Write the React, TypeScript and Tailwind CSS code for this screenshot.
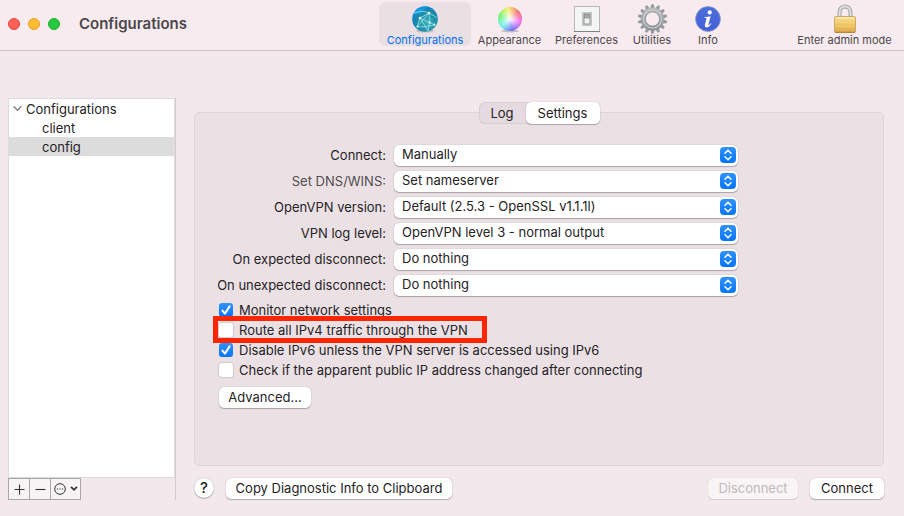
import React, { useState } from "react";

const spokes = Array.from({ length: 14 }, (_, i) => (i * 360) / 14);
const hues = Array.from({ length: 36 }, (_, i) => i * 10);

function GlobeIcon() {
  return (
    <svg width="28" height="28" viewBox="0 0 28 28" aria-hidden="true">
      <defs>
        <radialGradient id="globe" cx="0.6" cy="0.65" r="0.7">
          <stop offset="0" stopColor="#3db2ba" />
          <stop offset="0.6" stopColor="#198aa8" />
          <stop offset="1" stopColor="#0b80cf" />
        </radialGradient>
      </defs>
      <ellipse cx="14" cy="26" rx="9" ry="1.6" fill="#000" opacity="0.15" />
      <circle cx="14" cy="14" r="12.8" fill="url(#globe)" />
      <path d="M2 10A12.8 12.8 0 0 1 17 1.6L9 9Z" fill="#18a3ea" opacity="0.7" />
      <g fill="none" stroke="#a9ebf4" strokeWidth="0.7">
        <path d="M3 8Q12 5 18 8T26 13M18 8L9 13M9 13L6 22M9 13Q15 16 24 20M18 8Q20 16 17 26M6 22Q15 22 24 20M18 8L6 22M9 13L17 26" />
      </g>
      <g fill="#e6ffff">
        <circle cx="18" cy="8" r="1.2" />
        <circle cx="9" cy="13" r="1.3" />
        <circle cx="18.6" cy="17.6" r="1.1" />
        <circle cx="6.5" cy="21.5" r="1" />
        <circle cx="23.5" cy="19.5" r="0.9" />
      </g>
    </svg>
  );
}

function ColorWheelIcon() {
  return (
    <svg width="28" height="28" viewBox="0 0 28 28" aria-hidden="true">
      <defs>
        <radialGradient id="wheel">
          <stop offset="0" stopColor="#fff" stopOpacity="0.95" />
          <stop offset="0.5" stopColor="#fff" stopOpacity="0.5" />
          <stop offset="1" stopColor="#fff" stopOpacity="0.1" />
        </radialGradient>
      </defs>
      <ellipse cx="14" cy="26" rx="9" ry="1.5" fill="#000" opacity="0.2" />
      {hues.map((h) => (
        <path
          key={h}
          d="M14 14L25.9 13.9A12 12 0 0 1 25.6 16.6Z"
          fill={`hsl(${(h + 310) % 360} 85% 64%)`}
          transform={`rotate(${-h} 14 14)`}
        />
      ))}
      <circle cx="14" cy="14" r="12" fill="url(#wheel)" />
    </svg>
  );
}

function SwitchIcon() {
  return (
    <svg width="28" height="28" viewBox="0 0 28 28" aria-hidden="true">
      <rect x="1.5" y="1.5" width="25" height="25" fill="#f3f5f4" stroke="#b4b8b7" />
      <path d="M1 26.5H27" stroke="#7e8281" />
      <rect x="9.5" y="7.5" width="9" height="13" fill="#d3d6d5" stroke="#c3c6c5" />
      <rect x="11" y="9" width="6" height="10" fill="#a4a7a6" stroke="#8b8e8d" />
      <rect x="11.5" y="13.5" width="5" height="5" fill="#f0f1f0" />
    </svg>
  );
}

function GearIcon() {
  return (
    <svg width="32" height="30" viewBox="0 0 32 30" aria-hidden="true">
      <defs>
        <linearGradient id="gear" x2="0" y2="1">
          <stop offset="0" stopColor="#b9bdbe" />
          <stop offset="1" stopColor="#8f9496" />
        </linearGradient>
      </defs>
      <g fill="#969b9d">
        {spokes.map((a) => (
          <path key={a} d="M14.2 4.6L15.4 0.2H17.6L18.8 4.6Z" transform={`rotate(${a} 16.5 15)`} />
        ))}
      </g>
      <circle cx="16.5" cy="15" r="9.2" fill="none" stroke="url(#gear)" strokeWidth="4.4" />
      <circle cx="16.5" cy="15" r="9" fill="none" stroke="#c9cdce" strokeWidth="1.2" />
      <circle cx="16.5" cy="15" r="7.1" fill="none" stroke="#848a8c" strokeWidth="0.7" />
    </svg>
  );
}

function InfoIcon() {
  return (
    <svg width="28" height="28" viewBox="0 0 28 28" aria-hidden="true">
      <defs>
        <linearGradient id="info" x2="0" y2="1">
          <stop offset="0" stopColor="#4a6fd8" />
          <stop offset="1" stopColor="#4460dc" />
        </linearGradient>
      </defs>
      <circle cx="14" cy="14" r="12.4" fill="url(#info)" stroke="#8c9bc4" strokeWidth="0.8" />
      <circle cx="15.7" cy="7.4" r="2.1" fill="#fff" />
      <path
        d="M10.6 12.3Q13.6 11.8 16.6 11.2L14.4 19.4Q14.3 20.4 15 20Q15.8 19.4 16.6 18.2L17.3 18.7Q15.2 22.4 12.3 22.3Q10.3 22.1 10.9 19.6L12.5 14Q12.8 13 11.9 13L10.4 13.1Z"
        fill="#fff"
      />
    </svg>
  );
}

function LockIcon() {
  return (
    <svg width="24" height="30" viewBox="0 0 24 30" aria-hidden="true">
      <defs>
        <linearGradient id="brass" x2="0" y2="1">
          <stop offset="0" stopColor="#f8e097" />
          <stop offset="0.5" stopColor="#efc666" />
          <stop offset="1" stopColor="#dfa748" />
        </linearGradient>
      </defs>
      <path d="M6.5 14V8.2A5.5 5.8 0 0 1 17.5 8.2V14" fill="none" stroke="#9b9ea0" strokeWidth="4" />
      <path d="M6.5 14V8.2A5.5 5.8 0 0 1 17.5 8.2V14" fill="none" stroke="#dcdedf" strokeWidth="2.2" />
      <rect x="1.5" y="12.5" width="21" height="16" rx="1.5" fill="url(#brass)" stroke="#c49a50" strokeWidth="0.8" />
      <path d="M3 14H21" stroke="#fdf0bd" />
      <path d="M2.5 18.5H21.5M2.5 22.5H21.5" stroke="#f7dc8c" strokeWidth="0.5" />
      <path d="M2 28.3H22" stroke="#a87529" strokeWidth="0.8" />
    </svg>
  );
}

function ToolbarItem({ label, width, active, children }: {
  label: string;
  width: string;
  active?: boolean;
  children: React.ReactNode;
}) {
  return (
    <button
      type="button"
      className={`flex h-11 shrink-0 flex-col items-center rounded-md text-[11px] leading-3 whitespace-nowrap ${width} ${
        active ? "bg-[#eadfe3] text-[#0070f5]" : "text-[#4b474a]"
      }`}
    >
      <span className="flex h-8 items-center justify-center pt-0.5">{children}</span>
      <span>{label}</span>
    </button>
  );
}

const settings = [
  { id: "connect", label: "Connect:", value: "Manually" },
  { id: "dns", label: "Set DNS/WINS:", value: "Set nameserver", dim: true },
  { id: "version", label: "OpenVPN version:", value: "Default (2.5.3 - OpenSSL v1.1.1l)" },
  { id: "loglevel", label: "VPN log level:", value: "OpenVPN level 3 - normal output" },
  { id: "expected", label: "On expected disconnect:", value: "Do nothing" },
  { id: "unexpected", label: "On unexpected disconnect:", value: "Do nothing" },
];

const options = [
  { id: "monitor", label: "Monitor network settings", on: true },
  { id: "route", label: "Route all IPv4 traffic through the VPN", on: false, marked: true },
  { id: "ipv6", label: "Disable IPv6 unless the VPN server is accessed using IPv6", on: true },
  { id: "ipcheck", label: "Check if the apparent public IP address changed after connecting", on: false },
];

const raised = "shadow-[0_0_1px_rgba(0,0,0,0.35),0_1px_1px_rgba(0,0,0,0.25)]";

function PopUp({ id, value }: { id: string; value: string }) {
  return (
    <div className="relative h-[21px]">
      <select
        id={id}
        defaultValue={value}
        className={`block h-[21px] w-full appearance-none rounded-[5px] bg-white pr-6 pb-0.5 pl-2 leading-[19px] ${raised}`}
      >
        <option>{value}</option>
      </select>
      <span className="pointer-events-none absolute top-0.5 right-0.5 flex size-4 items-center justify-center rounded bg-linear-to-b from-[#2f92ff] to-[#0474fc]">
        <svg width="10" height="12" viewBox="0 0 10 12" fill="none" stroke="#fff" strokeWidth="1.5" strokeLinecap="round" strokeLinejoin="round" aria-hidden="true">
          <path d="M2 4.2L5 1.3L8 4.2M2 7.8L5 10.7L8 7.8" />
        </svg>
      </span>
    </div>
  );
}

function CheckOption({ id, label, on, marked }: { id: string; label: string; on: boolean; marked?: boolean }) {
  const [checked, setChecked] = useState(on);
  return (
    <div className="relative flex h-5 w-fit items-center">
      <span className="relative size-3.5">
        <input
          id={id}
          type="checkbox"
          checked={checked}
          onChange={(e) => setChecked(e.target.checked)}
          className="block size-3.5 appearance-none rounded-[3px] bg-white shadow-[0_0_1px_1px_rgba(0,0,0,0.1)] checked:bg-linear-to-b checked:from-[#2f92ff] checked:to-[#0474fc] checked:shadow-none"
        />
        {checked && (
          <svg className="pointer-events-none absolute inset-0" width="14" height="14" viewBox="0 0 14 14" fill="none" stroke="#fff" strokeWidth="2" strokeLinecap="round" strokeLinejoin="round" aria-hidden="true">
            <path d="M3.4 7.6L5.9 10.6L10.6 3.4" />
          </svg>
        )}
      </span>
      <label htmlFor={id} className="pl-1.5 whitespace-nowrap">{label}</label>
      {marked && (
        <span className="pointer-events-none absolute -top-1 -right-[19px] -bottom-[3px] -left-1.5 border-5 border-[#fb2600]" />
      )}
    </div>
  );
}

export default function App() {
  return (
    <div className="flex min-h-screen flex-col bg-[#f3e8ec] font-['Inter','Liberation_Sans',sans-serif] text-[13px] leading-5 text-[#262325]">
      <header className="flex border-b border-[#cfc3c8] bg-[#f8ebf0] pt-0.5 pr-[5px] pb-1">
        <div className="flex w-[379px] shrink-0 items-center gap-2 pl-2">
          <button type="button" aria-label="Close" className="size-3 rounded-full border border-[#e2463f] bg-[#ff5f57]" />
          <button type="button" aria-label="Minimize" className="size-3 rounded-full border border-[#e0a028] bg-[#febc2e]" />
          <button type="button" aria-label="Zoom" className="size-3 rounded-full border border-[#1dae2c] bg-[#28c840]" />
          <h1 className="pl-[11px] text-[15px] font-semibold text-[#4b474a]">Configurations</h1>
        </div>
        <nav className="flex" aria-label="Toolbar">
          <ToolbarItem label="Configurations" width="w-[92px]" active><GlobeIcon /></ToolbarItem>
          <ToolbarItem label="Appearance" width="w-[77px]"><ColorWheelIcon /></ToolbarItem>
          <ToolbarItem label="Preferences" width="w-[77px]"><SwitchIcon /></ToolbarItem>
          <ToolbarItem label="Utilities" width="w-[54px]"><GearIcon /></ToolbarItem>
          <ToolbarItem label="Info" width="w-[58px]"><InfoIcon /></ToolbarItem>
        </nav>
        <div className="ml-auto">
          <ToolbarItem label="Enter admin mode" width="w-[109px]"><LockIcon /></ToolbarItem>
        </div>
      </header>

      <main className="flex flex-1 pt-[47px] pr-5 pb-4 pl-2">
        <aside className="flex w-[168px] shrink-0 flex-col border-r border-[#d5cacf]">
          <div className="flex-1 border border-[#dfdadc] bg-white leading-[21px]">
            <div className="flex h-[19px] items-center gap-1 pl-1">
              <svg width="9" height="9" viewBox="0 0 9 9" fill="none" stroke="#7d7a7c" strokeWidth="1.3" strokeLinecap="round" strokeLinejoin="round" aria-hidden="true">
                <path d="M1 2.7L4.5 6.3L8 2.7" />
              </svg>
              <span className="pt-px">Configurations</span>
            </div>
            <button type="button" className="flex h-[19px] w-full items-center pt-px pl-[33px]">client</button>
            <button type="button" className="flex h-[19px] w-full items-center bg-[#dcdcdc] pt-px pl-[33px]">config</button>
          </div>
          <div className="flex h-[22px] w-fit divide-x divide-[#aaa7a8] border border-[#aaa7a8] bg-[#f6f4f5]">
            <button type="button" aria-label="Add" className="flex w-[21px] items-center justify-center">
              <svg width="11" height="11" viewBox="0 0 11 11" stroke="#333" strokeWidth="1.1" aria-hidden="true"><path d="M5.5 0.5V10.5M0.5 5.5H10.5" /></svg>
            </button>
            <button type="button" aria-label="Remove" className="flex w-[21px] items-center justify-center">
              <svg width="11" height="11" viewBox="0 0 11 11" stroke="#333" strokeWidth="1.1" aria-hidden="true"><path d="M0.5 5.5H10.5" /></svg>
            </button>
            <button type="button" aria-label="More actions" className="flex w-[29px] items-center justify-center gap-1">
              <svg width="12" height="12" viewBox="0 0 12 12" aria-hidden="true">
                <circle cx="6" cy="6" r="5.3" fill="none" stroke="#333" />
                <path d="M2.9 6H4.1M5.4 6H6.6M7.9 6H9.1" stroke="#333" strokeWidth="1.2" />
              </svg>
              <svg width="8" height="8" viewBox="0 0 8 8" fill="none" stroke="#333" strokeWidth="1.7" aria-hidden="true"><path d="M1 1.8L4 4.8L7 1.8" /></svg>
            </button>
          </div>
        </aside>

        <section className="flex min-w-0 flex-1 flex-col pl-[18px]">
          <div role="tablist" className="relative z-10 mt-1 flex h-[22px] self-center rounded-md bg-[#e5dadf] shadow-[inset_0_0_0_1px_#d9ced3]">
            <button type="button" role="tab" aria-selected="false" className="w-[47px] rounded-md pb-px">Log</button>
            <button type="button" role="tab" aria-selected="true" className={`w-[74px] rounded-[5px] bg-white pb-px ${raised}`}>Settings</button>
          </div>

          <form className="-mt-3 flex-1 rounded-[5px] border border-[#dfd4d9] bg-[#ebe1e5] pt-8 pr-6 pl-6" onSubmit={(e) => e.preventDefault()}>
            <div className="-ml-0.5 grid grid-cols-[169px_minmax(0,344px)] gap-x-2 gap-y-[5px]">
              {settings.map((s) => (
                <React.Fragment key={s.id}>
                  <label htmlFor={s.id} className={`h-[21px] text-right leading-[21px] whitespace-nowrap ${s.dim ? "text-[#504c4f]" : ""}`}>{s.label}</label>
                  <PopUp id={s.id} value={s.value} />
                </React.Fragment>
              ))}
            </div>
            <div className="mt-1">
              {options.map((o) => (
                <CheckOption key={o.id} {...o} />
              ))}
            </div>
            <button type="button" className={`mt-[7px] h-[21px] w-[92px] rounded-[5px] bg-white pb-0.5 ${raised}`}>Advanced...</button>
          </form>

          <div className="mt-[11px] mb-px flex h-[22px] items-center">
            <button type="button" aria-label="Help" className={`size-5 rounded-full bg-white text-[15px] font-medium ${raised}`}>?</button>
            <button type="button" className={`ml-3 h-[21px] w-[226px] rounded-[5px] bg-white pb-0.5 ${raised}`}>Copy Diagnostic Info to Clipboard</button>
            <button type="button" disabled className="ml-auto h-[21px] w-[90px] rounded-[5px] bg-[#f9f4f6] pb-0.5 text-[#bfb9bc] shadow-[0_0_1px_rgba(0,0,0,0.2),0_1px_1px_rgba(0,0,0,0.1)]">Disconnect</button>
            <button type="button" className={`ml-3 h-[21px] w-[74px] rounded-[5px] bg-white pb-0.5 ${raised}`}>Connect</button>
          </div>
        </section>
      </main>
    </div>
  );
}
